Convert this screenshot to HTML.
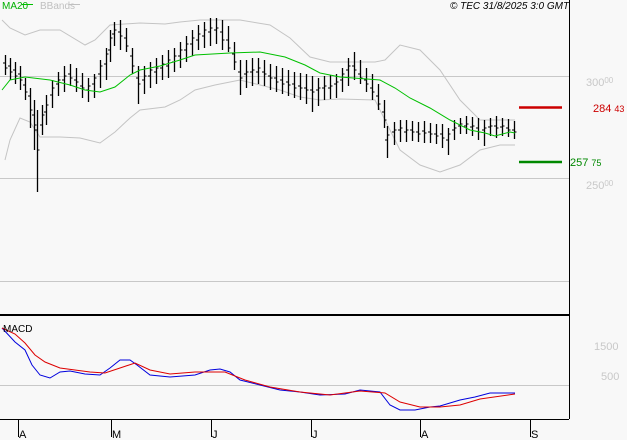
<!DOCTYPE html>
<html><head><meta charset="utf-8"><style>
html,body{margin:0;padding:0;background:#f8f8f8;}
svg{display:block;font-family:"Liberation Sans",sans-serif;}
</style></head><body>
<svg width="627" height="440" viewBox="0 0 627 440" xmlns="http://www.w3.org/2000/svg">
<rect width="627" height="440" fill="#f8f8f8"/>
<g stroke="#c8c8c8" stroke-width="1">
<line x1="0" y1="76.5" x2="569" y2="76.5"/>
<line x1="0" y1="178.5" x2="569" y2="178.5"/>
<line x1="0" y1="281.5" x2="569" y2="281.5"/>
<line x1="0" y1="385.5" x2="569" y2="385.5"/>
</g>
<g fill="none" stroke="#c4c4c4" stroke-width="1">
<polyline points="2,20 10,28 25,35 40,30 60,30 85,45 95,40 110,25 140,23 165,24 180,22 200,20 240,20 270,25 290,38 310,57 330,62 350,62 375,62 385,60 400,45 420,50 440,70 460,100 480,120 500,120 515,120"/>
<polyline points="5,160 10,140 20,118 30,122 40,137 60,137 80,138 100,143 115,132 130,118 140,110 165,107 180,100 195,90 215,85 240,80 260,85 280,90 300,97 320,100 340,99 375,100 385,120 400,150 420,165 440,172 460,165 480,150 500,145 515,145"/>
</g>
<path fill="none" stroke="#000" stroke-width="1.3" d="
M5.5 55V75M10.5 58V80M15.5 62V84M20.5 66V90M25.5 78V100M30.5 88V128M34.5 100V150M37.5 110V192M42.5 105V135M46.5 95V125M52.5 80V108M58.5 72V96M64.5 66V92M70.5 64V86M76.5 68V92M82.5 73V98M88.5 78V102M94.5 74V98M100.5 60V88M106.5 48V80M110.5 30V62M114.5 22V46M120.5 20V50M126.5 28V52M132.5 48V74M138.5 66V104M144.5 66V94M150.5 62V88M156.5 58V84M162.5 55V80M168.5 50V78M174.5 48V72M180.5 42V68M186.5 36V62M192.5 30V56M198.5 25V50M204.5 22V48M210.5 18V46M216.5 18V44M222.5 20V50M228.5 26V52M234.5 42V70M240.5 60V95M246.5 60V88M252.5 58V86M258.5 58V84M264.5 60V86M270.5 64V90M276.5 66V92M282.5 68V94M288.5 70V96M294.5 72V98M300.5 73V100M306.5 74V104M312.5 76V112M318.5 78V106M324.5 76V100M330.5 75V99M336.5 74V98M342.5 68V92M348.5 58V86M354.5 52V80M360.5 60V84M366.5 68V92M372.5 74V100M378.5 84V110M384.5 100V128M387.5 126V158M394.5 122V145M400.5 120V142M406.5 120V142M412.5 121V141M418.5 122V142M424.5 121V143M430.5 123V143M436.5 124V144M442.5 124V148M448.5 128V155M454.5 120V140M460.5 118V134M466.5 116V134M472.5 117V136M478.5 118V140M484.5 120V146M490.5 118V136M496.5 116V138M502.5 118V136M508.5 119V137M514.5 121V139"/>
<path fill="none" stroke="#000" stroke-width="1" d="
M3 63h2.5M5.5 68h2M8 66h2.5M10.5 72h2M13 70h2.5M15.5 76h2M18 74h2.5M20.5 80h2M23 85h2.5M25.5 92h2M28 96h2.5M30.5 110h2M32 115h2.5M34.5 125h2M35 130h2.5M37.5 150h2M40 125h2.5M42.5 115h2M44 112h2.5M46.5 105h2M50 95h2.5M52.5 88h2M56 84h2.5M58.5 80h2M62 80h2.5M64.5 76h2M68 74h2.5M70.5 78h2M74 80h2.5M76.5 82h2M80 86h2.5M82.5 88h2M86 90h2.5M88.5 86h2M92 84h2.5M94.5 78h2M98 74h2.5M100.5 66h2M104 64h2.5M106.5 54h2M108 50h2.5M110.5 38h2M112 34h2.5M114.5 30h2M118 32h2.5M120.5 36h2M124 38h2.5M126.5 46h2M130 56h2.5M132.5 66h2M136 78h2.5M138.5 84h2M142 80h2.5M144.5 76h2M148 76h2.5M150.5 70h2M154 72h2.5M156.5 68h2M160 68h2.5M162.5 64h2M166 66h2.5M168.5 60h2M172 62h2.5M174.5 56h2M178 56h2.5M180.5 50h2M184 50h2.5M186.5 44h2M190 44h2.5M192.5 38h2M196 40h2.5M198.5 34h2M202 36h2.5M204.5 30h2M208 32h2.5M210.5 28h2M214 30h2.5M216.5 28h2M220 32h2.5M222.5 40h2M226 40h2.5M228.5 48h2M232 54h2.5M234.5 62h2M238 72h2.5M240.5 78h2M244 74h2.5M246.5 72h2M250 72h2.5M252.5 70h2M256 72h2.5M258.5 68h2M262 72h2.5M264.5 74h2M268 76h2.5M270.5 78h2M274 78h2.5M276.5 82h2M280 80h2.5M282.5 84h2M286 82h2.5M288.5 85h2M292 84h2.5M294.5 88h2M298 86h2.5M300.5 88h2M304 88h2.5M306.5 90h2M310 90h2.5M312.5 92h2M316 90h2.5M318.5 88h2M322 88h2.5M324.5 86h2M328 88h2.5M330.5 86h2M334 84h2.5M336.5 82h2M340 80h2.5M342.5 74h2M346 70h2.5M348.5 66h2M352 66h2.5M354.5 70h2M358 74h2.5M360.5 78h2M364 80h2.5M366.5 84h2M370 88h2.5M372.5 92h2M376 96h2.5M378.5 104h2M382 112h2.5M384.5 120h2M385 140h2.5M387.5 135h2M392 132h2.5M394.5 130h2M398 130h2.5M400.5 128h2M404 132h2.5M406.5 130h2M410 130h2.5M412.5 132h2M416 132h2.5M418.5 134h2M422 131h2.5M424.5 133h2M428 132h2.5M430.5 134h2M434 134h2.5M436.5 136h2M440 134h2.5M442.5 138h2M446 140h2.5M448.5 134h2M452 130h2.5M454.5 128h2M458 126h2.5M460.5 124h2M464 126h2.5M466.5 124h2M470 127h2.5M472.5 126h2M476 128h2.5M478.5 132h2M482 130h2.5M484.5 128h2M488 127h2.5M490.5 126h2M494 126h2.5M496.5 128h2M500 127h2.5M502.5 126h2M506 128h2.5M508.5 130h2M512 130h2.5M514.5 132h2"/>
<polyline fill="none" stroke="#00c000" stroke-width="1" points="2,90 10,80 25,77 50,80 70,85 85,90 100,92 115,87 130,75 140,70 160,66 180,60 195,55 230,53 260,52 285,57 305,65 320,73 340,77 380,80 395,88 410,98 430,108 450,120 470,130 485,133 495,136 510,132 515,133"/>
<line x1="519" y1="107.5" x2="562" y2="107.5" stroke="#cc0000" stroke-width="2.5"/>
<line x1="519" y1="162" x2="562" y2="162" stroke="#008800" stroke-width="2.5"/>
<line x1="569.5" y1="0" x2="569.5" y2="419" stroke="#000" stroke-width="1"/>
<line x1="0" y1="315" x2="569" y2="315" stroke="#000" stroke-width="2"/>
<line x1="0" y1="419.5" x2="569" y2="419.5" stroke="#000" stroke-width="1"/>
<g stroke="#000" stroke-width="1">
<line x1="18.5" y1="419" x2="18.5" y2="437"/><line x1="111.5" y1="419" x2="111.5" y2="437"/>
<line x1="211.5" y1="419" x2="211.5" y2="437"/><line x1="311.5" y1="419" x2="311.5" y2="437"/>
<line x1="420.5" y1="419" x2="420.5" y2="437"/><line x1="530.5" y1="419" x2="530.5" y2="437"/>
</g>
<g font-size="11" fill="#000">
<text x="19" y="438">A</text><text x="112" y="438">M</text><text x="212" y="438">J</text>
<text x="312" y="438">J</text><text x="421" y="438">A</text><text x="531" y="438">S</text>
</g>
<polyline fill="none" stroke="#0000dd" stroke-width="1" points="2,328 15,342 25,350 32,365 40,375 50,378 60,372 70,371 85,374 100,375 110,368 120,360 130,360 137,365 150,375 170,377 195,375 210,370 220,369 230,372 240,380 260,385 280,390 300,392 320,395 345,394 360,390 380,392 390,405 400,410 415,410 430,407 440,406 460,400 475,397 490,393 515,393"/>
<polyline fill="none" stroke="#dd0000" stroke-width="1" points="2,328 15,334 25,343 35,355 45,362 60,368 90,372 105,373 120,368 135,363 150,370 170,374 195,372 225,372 245,380 270,387 300,392 330,395 360,391 385,393 400,402 420,407 440,407 460,405 480,399 515,394"/>
<text x="3" y="332" font-size="10" fill="#000">MACD</text>
<text x="2" y="9" font-size="10" fill="#00b000">MA20</text>
<line x1="22" y1="4.5" x2="33" y2="4.5" stroke="#00c000"/>
<text x="40" y="9" font-size="10" fill="#c0c0c0">BBands</text>
<line x1="69" y1="4.5" x2="80" y2="4.5" stroke="#c0c0c0"/>
<text x="450" y="9" font-size="10" font-style="italic" fill="#000">© TEC 31/8/2025 3:0 GMT</text>
<g fill="#c8c8c8" font-size="11">
<text x="586" y="86">300<tspan font-size="8" dy="-3">00</tspan></text>
<text x="586" y="189">250<tspan font-size="8" dy="-3">00</tspan></text>
<text x="594" y="350">1500</text>
<text x="601" y="380">500</text>
</g>
<text x="593" y="112" font-size="11" fill="#cc0000">284 <tspan font-size="9">43</tspan></text>
<text x="570" y="166" font-size="11" fill="#008800">257 <tspan font-size="9">75</tspan></text>
</svg>
</body></html>
